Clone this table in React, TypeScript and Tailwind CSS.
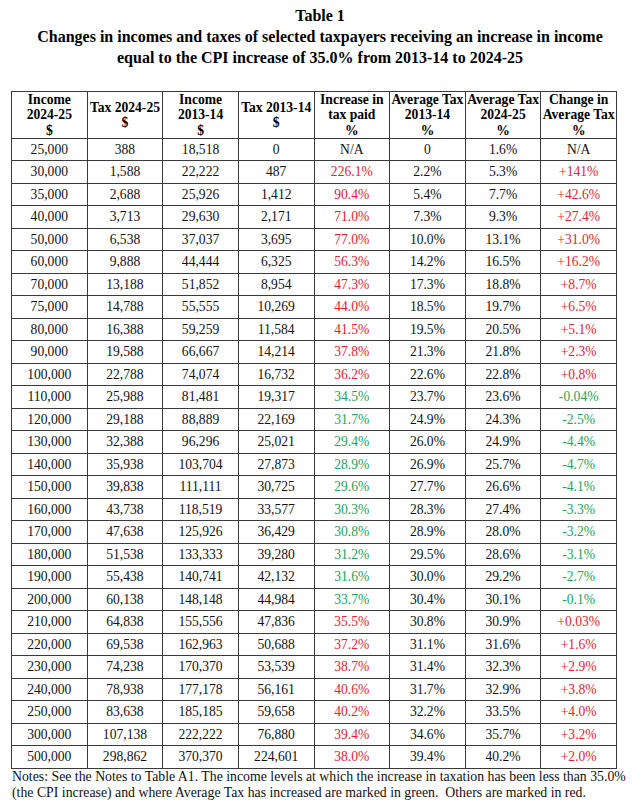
import React from "react";

type C = "" | "r" | "g";
const rows: [string[], C][] = [
  [["25,000", "388", "18,518", "0", "N/A", "0", "1.6%", "N/A"], ""],
  [["30,000", "1,588", "22,222", "487", "226.1%", "2.2%", "5.3%", "+141%"], "r"],
  [["35,000", "2,688", "25,926", "1,412", "90.4%", "5.4%", "7.7%", "+42.6%"], "r"],
  [["40,000", "3,713", "29,630", "2,171", "71.0%", "7.3%", "9.3%", "+27.4%"], "r"],
  [["50,000", "6,538", "37,037", "3,695", "77.0%", "10.0%", "13.1%", "+31.0%"], "r"],
  [["60,000", "9,888", "44,444", "6,325", "56.3%", "14.2%", "16.5%", "+16.2%"], "r"],
  [["70,000", "13,188", "51,852", "8,954", "47.3%", "17.3%", "18.8%", "+8.7%"], "r"],
  [["75,000", "14,788", "55,555", "10,269", "44.0%", "18.5%", "19.7%", "+6.5%"], "r"],
  [["80,000", "16,388", "59,259", "11,584", "41.5%", "19.5%", "20.5%", "+5.1%"], "r"],
  [["90,000", "19,588", "66,667", "14,214", "37.8%", "21.3%", "21.8%", "+2.3%"], "r"],
  [["100,000", "22,788", "74,074", "16,732", "36.2%", "22.6%", "22.8%", "+0.8%"], "r"],
  [["110,000", "25,988", "81,481", "19,317", "34.5%", "23.7%", "23.6%", "-0.04%"], "g"],
  [["120,000", "29,188", "88,889", "22,169", "31.7%", "24.9%", "24.3%", "-2.5%"], "g"],
  [["130,000", "32,388", "96,296", "25,021", "29.4%", "26.0%", "24.9%", "-4.4%"], "g"],
  [["140,000", "35,938", "103,704", "27,873", "28.9%", "26.9%", "25.7%", "-4.7%"], "g"],
  [["150,000", "39,838", "111,111", "30,725", "29.6%", "27.7%", "26.6%", "-4.1%"], "g"],
  [["160,000", "43,738", "118,519", "33,577", "30.3%", "28.3%", "27.4%", "-3.3%"], "g"],
  [["170,000", "47,638", "125,926", "36,429", "30.8%", "28.9%", "28.0%", "-3.2%"], "g"],
  [["180,000", "51,538", "133,333", "39,280", "31.2%", "29.5%", "28.6%", "-3.1%"], "g"],
  [["190,000", "55,438", "140,741", "42,132", "31.6%", "30.0%", "29.2%", "-2.7%"], "g"],
  [["200,000", "60,138", "148,148", "44,984", "33.7%", "30.4%", "30.1%", "-0.1%"], "g"],
  [["210,000", "64,838", "155,556", "47,836", "35.5%", "30.8%", "30.9%", "+0.03%"], "r"],
  [["220,000", "69,538", "162,963", "50,688", "37.2%", "31.1%", "31.6%", "+1.6%"], "r"],
  [["230,000", "74,238", "170,370", "53,539", "38.7%", "31.4%", "32.3%", "+2.9%"], "r"],
  [["240,000", "78,938", "177,178", "56,161", "40.6%", "31.7%", "32.9%", "+3.8%"], "r"],
  [["250,000", "83,638", "185,185", "59,658", "40.2%", "32.2%", "33.5%", "+4.0%"], "r"],
  [["300,000", "107,138", "222,222", "76,880", "39.4%", "34.6%", "35.7%", "+3.2%"], "r"],
  [["500,000", "298,862", "370,370", "224,601", "38.0%", "39.4%", "40.2%", "+2.0%"], "r"],
];

const headers: string[][] = [
  ["Income", "2024-25", "$"],
  ["Tax 2024-25", "$"],
  ["Income", "2013-14", "$"],
  ["Tax 2013-14", "$"],
  ["Increase in", "tax paid", "%"],
  ["Average Tax", "2013-14", "%"],
  ["Average Tax", "2024-25", "%"],
  ["Change in", "Average Tax", "%"],
];

export default function App() {
  return (
    <div className="w-[640px] h-[807px] bg-white text-black font-['Liberation_Serif','Times_New_Roman',serif] overflow-hidden">
      <div className="pt-[5px] text-center font-bold text-[16px] leading-[21px]">
        <div>Table 1</div>
        <div>Changes in incomes and taxes of selected taxpayers receiving an increase in income</div>
        <div>equal to the CPI increase of 35.0% from 2013-14 to 2024-25</div>
      </div>
      <table className="mt-[23px] ml-[11px] w-[606px] table-fixed border-collapse">
        <thead>
          <tr className="h-[45px]">
            {headers.map((h, i) => (
              <th
                key={i}
                className="border border-[#3a3a3a] p-0 align-middle text-center font-bold text-[13.6px] leading-[15.3px] whitespace-nowrap"
              >
                {h.map((l, j) => (
                  <div key={j}>{l}</div>
                ))}
              </th>
            ))}
          </tr>
        </thead>
        <tbody>
          {rows.map(([cells, c], ri) => (
            <tr key={ri} className="h-[22.5px]">
              {cells.map((v, ci) => {
                const colored = ci === 4 || ci === 7;
                const color =
                  colored && c === "r"
                    ? "text-[#e4232c]"
                    : colored && c === "g"
                    ? "text-[#1ea35a]"
                    : "text-[#111]";
                return (
                  <td
                    key={ci}
                    className={`border border-[#3a3a3a] p-0 align-middle text-center text-[13.6px] leading-[16px] ${color}`}
                  >
                    {v}
                  </td>
                );
              })}
            </tr>
          ))}
        </tbody>
      </table>
      <div className="pl-[12px] text-[13.8px] leading-[16.5px] whitespace-nowrap text-[#111]">
        <div>Notes: See the Notes to Table A1. The income levels at which the increase in taxation has been less than 35.0%</div>
        <div className="whitespace-pre">(the CPI increase) and where Average Tax has increased are marked in green.  Others are marked in red.</div>
      </div>
    </div>
  );
}
